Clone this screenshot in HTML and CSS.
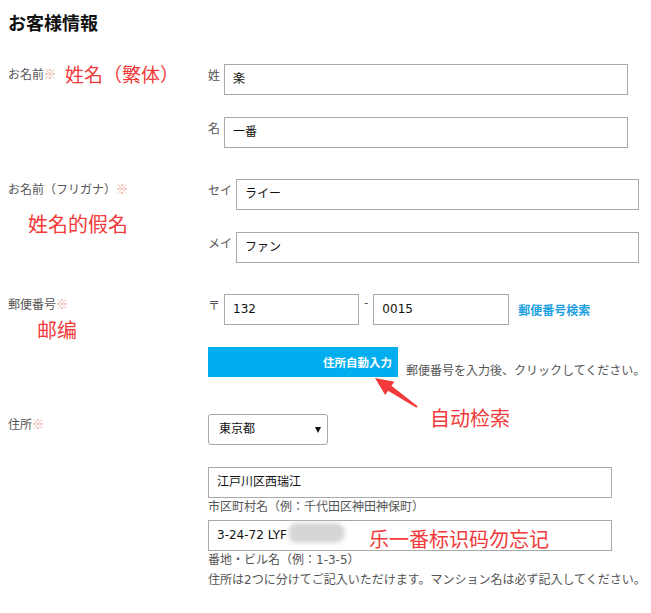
FILE: index.html
```html
<!DOCTYPE html>
<html lang="ja">
<head>
<meta charset="utf-8">
<title>お客様情報</title>
<link rel="stylesheet" href="styles.css">
</head>
<body>
<div class="page">
  <h1 class="title">お客様情報</h1>

  <div class="row">
    <div class="label-col label-inline">
      <span class="label">お名前<span class="req">※</span></span>
      <span class="note note-name">姓名（繁体）</span>
    </div>
    <div class="content-col">
      <div class="field"><span class="sub">姓</span><div class="input w404">楽</div></div>
      <div class="field"><span class="sub">名</span><div class="input w404">一番</div></div>
    </div>
  </div>

  <div class="row">
    <div class="label-col">
      <div class="label">お名前（フリガナ）<span class="req">※</span></div>
      <div class="note note-kana">姓名的假名</div>
    </div>
    <div class="content-col">
      <div class="field"><span class="sub">セイ</span><div class="input w403">ライー</div></div>
      <div class="field"><span class="sub">メイ</span><div class="input w403">ファン</div></div>
    </div>
  </div>

  <div class="row row-zip">
    <div class="label-col">
      <div class="label">郵便番号<span class="req">※</span></div>
      <div class="note note-zip">邮编</div>
    </div>
    <div class="content-col">
      <div class="field">
        <span class="sub">〒</span>
        <div class="input w135">132</div>
        <span class="dash">-</span>
        <div class="input w136">0015</div>
        <span class="zip-link">郵便番号検索</span>
      </div>
      <div class="field btn-row">
        <div class="btn">住所自動入力</div>
        <span class="help">郵便番号を入力後、クリックしてください。</span>
      </div>
    </div>
  </div>

  <div class="row">
    <div class="label-col">
      <div class="label">住所<span class="req">※</span></div>
    </div>
    <div class="content-col">
      <div class="field">
        <div class="select">東京都<span class="caret"></span></div>
      </div>
      <div class="input w404 addr1">江戸川区西瑞江</div>
      <div class="hint hint1">市区町村名（例：千代田区神田神保町）</div>
      <div class="input w404 addr2">3-24-72 LYF<span class="blur"></span><span class="note note-code">乐一番标识码勿忘记</span></div>
      <div class="hint">番地・ビル名（例：1-3-5）</div>
      <div class="hint hint3">住所は2つに分けてご記入いただけます。マンション名は必ず記入してください。</div>
    </div>
  </div>

  <div class="note note-auto">自动检索</div>
  <svg class="arrow" width="52" height="38" viewBox="370 374 52 38">
    <polygon fill="#f23a3a" points="375,378 394.4,381.7 391.5,385.8 417.6,406.2 416.4,407.8 388.1,390.8 385.2,394.9"/>
  </svg>
</div>
</body>
</html>
```

FILE: styles.css
```css
html, body {
  margin: 0;
  padding: 0;
  background: #ffffff;
}

body {
  font-family: "DejaVu Sans", "Noto Sans CJK JP", sans-serif;
  font-size: 12px;
  color: #555555;
}

.page {
  position: relative;
  width: 651px;
  height: 613px;
  padding: 0 8px;
  box-sizing: border-box;
  overflow: hidden;
}

.title {
  margin: 0;
  padding-top: 10px;
  font-family: "Noto Sans CJK JP", sans-serif;
  font-size: 18px;
  line-height: 24px;
  font-weight: bold;
  color: #111111;
  margin-bottom: 30px;
}

.row {
  display: flex;
  margin-bottom: 31px;
}

.row-zip {
  margin-bottom: 37px;
}

.label-col {
  width: 200px;
  flex: none;
}

.label-inline {
  display: flex;
  align-items: flex-start;
}

.label {
  display: block;
  font-size: 12px;
  line-height: 16px;
  padding-top: 2px;
  color: #555555;
  white-space: nowrap;
}

.req {
  font-family: "Noto Sans CJK JP", sans-serif;
  color: #eaa08c;
}

.note {
  font-family: "Noto Sans CJK SC", "Noto Sans CJK JP", sans-serif;
  color: #f23a3a;
  font-size: 20px;
  line-height: 22px;
  white-space: nowrap;
}

.note-name {
  font-size: 19px;
  line-height: 20px;
  margin-left: 9px;
}

.note-kana {
  margin-top: 15px;
  margin-left: 20px;
}

.note-zip {
  margin-top: 6px;
  margin-left: 29px;
}

.content-col {
  display: flex;
  flex-direction: column;
}

.field {
  display: flex;
  align-items: flex-start;
  gap: 4px;
  margin-bottom: 22px;
}

.content-col > .field:last-child {
  margin-bottom: 0;
}

.sub {
  font-family: "Noto Sans CJK JP", sans-serif;
  font-size: 12px;
  line-height: 16px;
  padding-top: 3px;
  color: #555555;
  white-space: nowrap;
}

.input {
  position: relative;
  box-sizing: border-box;
  height: 31px;
  border: 1px solid #a9a9a9;
  background: #ffffff;
  padding-left: 8px;
  font-size: 12px;
  line-height: 29px;
  color: #111111;
  white-space: nowrap;
}

.w404 { width: 404px; }
.w403 { width: 403px; }
.w135 { width: 135px; }
.w136 { width: 136px; }

.dash {
  font-size: 12px;
  line-height: 16px;
  padding-top: 1px;
  margin: 0 1px;
  color: #555555;
}

.zip-link {
  align-self: center;
  margin-left: 5px;
  font-family: "Noto Sans CJK JP", sans-serif;
  font-weight: bold;
  font-size: 12px;
  line-height: 16px;
  color: #1b9fe0;
  white-space: nowrap;
}

.btn-row {
  align-items: flex-end;
  gap: 8px;
}

.btn {
  width: 190px;
  height: 30px;
  box-sizing: border-box;
  background: #00aeef;
  color: #ffffff;
  font-family: "Noto Sans CJK JP", sans-serif;
  font-weight: bold;
  font-size: 11.5px;
  line-height: 30px;
  text-align: right;
  padding-right: 6px;
}

.help {
  font-size: 12px;
  line-height: 18px;
  color: #555555;
  white-space: nowrap;
  position: relative;
  top: 3px;
}

.select {
  position: relative;
  width: 120px;
  height: 31px;
  box-sizing: border-box;
  border: 1px solid #a9a9a9;
  border-radius: 3px;
  padding-left: 10px;
  font-size: 12px;
  line-height: 29px;
  color: #111111;
}

.caret {
  position: absolute;
  right: 6px;
  top: 12px;
  width: 0;
  height: 0;
  border-left: 3.5px solid transparent;
  border-right: 3.5px solid transparent;
  border-top: 6px solid #111111;
}

.hint {
  font-size: 12px;
  line-height: 18px;
  color: #555555;
  white-space: nowrap;
}

.hint1 {
  margin-bottom: 4px;
}

.hint3 {
  margin-top: 2px;
}

.blur {
  position: absolute;
  left: 80px;
  top: 2px;
  width: 56px;
  height: 20px;
  background: #d6d6d6;
  border-radius: 8px 12px 12px 8px;
  filter: blur(2px);
}

.note-code {
  position: absolute;
  left: 160px;
  top: 7px;
}

.note-auto {
  position: absolute;
  left: 430px;
  top: 407px;
}

.arrow {
  position: absolute;
  left: 370px;
  top: 374px;
}
```
